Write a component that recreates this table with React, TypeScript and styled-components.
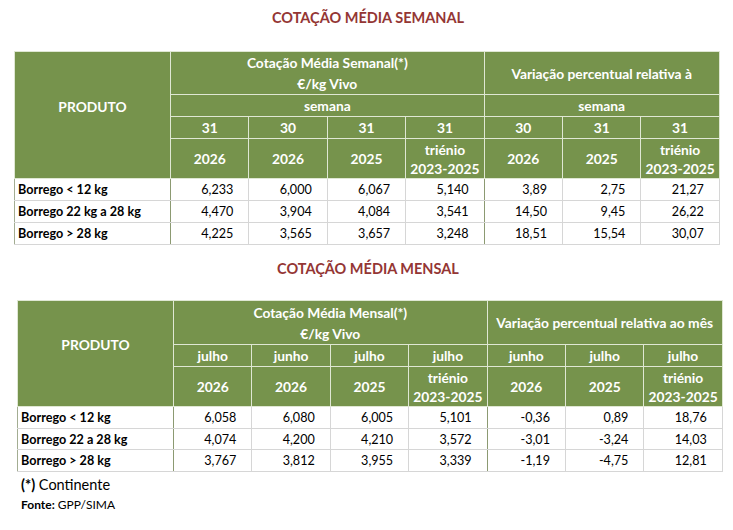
import React from "react";
import styled, { createGlobalStyle } from "styled-components";

const GlobalStyle = createGlobalStyle`
  body {
    margin: 0;
    background: #ffffff;
    font-family: Lato, "Open Sans", "Liberation Sans", sans-serif;
  }
`;

const GREEN = "#76934c";
const HEAD_LINE = "#dfe7d3";
const DARK_LINE = "#8c9a72";
const LIGHT_LINE = "#d6d6d6";

const Page = styled.div`
  width: 733px;
  height: 530px;
  display: flex;
  flex-direction: column;
  padding-top: 8px;
  box-sizing: border-box;
`;

const Title = styled.h2<{ $top: number }>`
  margin: ${(p) => p.$top}px 0 0 0;
  height: 20px;
  line-height: 20px;
  text-align: center;
  font-size: 14.5px;
  font-weight: 700;
  color: #943634;
  padding-left: 3px;
`;

const Table = styled.table<{ $left: number; $top: number }>`
  margin: ${(p) => p.$top}px 0 0 ${(p) => p.$left}px;
  width: 705px;
  border-collapse: collapse;
  table-layout: fixed;
  border: 1px solid #a3ad92;
  font-size: 12.6px;
`;

const Row = styled.tr<{ $h: number }>`
  height: ${(p) => p.$h}px;
`;

const Head = styled.th<{ $pb?: number; $lh?: number }>`
  background: ${GREEN};
  color: #ffffff;
  font-weight: 700;
  font-size: 13.8px;
  text-align: center;
  vertical-align: middle;
  border: 1px solid ${HEAD_LINE};
  padding: 0 1px ${(p) => p.$pb ?? 0}px;
  line-height: ${(p) => p.$lh ?? 19}px;
  white-space: nowrap;
`;

const NameCell = styled.td`
  font-weight: 700;
  text-align: left;
  color: #000;
  padding: 0 0 0 3px;
  border-bottom: 1px solid ${LIGHT_LINE};
  border-right: 1px solid ${DARK_LINE};
  white-space: nowrap;
`;

const ValueCell = styled.td<{ $strong?: boolean }>`
  text-align: right;
  color: #000;
  padding: 0 15px 0 0;
  border-bottom: 1px solid ${LIGHT_LINE};
  border-right: 1px solid ${(p) => (p.$strong ? DARK_LINE : LIGHT_LINE)};
`;

const Notes = styled.div`
  margin: 2px 0 0 21px;
  display: flex;
  flex-direction: column;
  color: #000;
`;

const NoteLine = styled.div<{ $size: number; $h: number }>`
  height: ${(p) => p.$h}px;
  line-height: ${(p) => p.$h}px;
  font-size: ${(p) => p.$size}px;

  b {
    font-weight: 700;
  }
`;

type DataRow = { name: string; values: string[] };

const weekly: DataRow[] = [
  { name: "Borrego < 12 kg", values: ["6,233", "6,000", "6,067", "5,140", "3,89", "2,75", "21,27"] },
  { name: "Borrego 22 kg a 28 kg", values: ["4,470", "3,904", "4,084", "3,541", "14,50", "9,45", "26,22"] },
  { name: "Borrego > 28 kg", values: ["4,225", "3,565", "3,657", "3,248", "18,51", "15,54", "30,07"] },
];

const monthly: DataRow[] = [
  { name: "Borrego < 12 kg", values: ["6,058", "6,080", "6,005", "5,101", "-0,36", "0,89", "18,76"] },
  { name: "Borrego 22 a 28 kg", values: ["4,074", "4,200", "4,210", "3,572", "-3,01", "-3,24", "14,03"] },
  { name: "Borrego > 28 kg", values: ["3,767", "3,812", "3,955", "3,339", "-1,19", "-4,75", "12,81"] },
];

const Cols = () => (
  <colgroup>
    <col style={{ width: 156 }} />
    {Array.from({ length: 7 }).map((_, i) => (
      <col key={i} style={{ width: 78.4 }} />
    ))}
  </colgroup>
);

const Triennium = () => (
  <>
    triénio
    <br />
    2023-2025
  </>
);

const YearRow = () => (
  <Row $h={40}>
    <Head>2026</Head>
    <Head>2026</Head>
    <Head>2025</Head>
    <Head>
      <Triennium />
    </Head>
    <Head>2026</Head>
    <Head>2025</Head>
    <Head>
      <Triennium />
    </Head>
  </Row>
);

const Body = ({ rows, heights }: { rows: DataRow[]; heights: number[] }) => (
  <tbody>
    {rows.map((r, i) => (
      <Row key={r.name} $h={heights[i]}>
        <NameCell>{r.name}</NameCell>
        {r.values.map((v, j) => (
          <ValueCell key={j} $strong={j === 3}>
            {v}
          </ValueCell>
        ))}
      </Row>
    ))}
  </tbody>
);

export default function App() {
  return (
    <Page>
      <GlobalStyle />
      <Title $top={0}>COTAÇÃO MÉDIA SEMANAL</Title>
      <Table $left={14} $top={23}>
        <Cols />
        <thead>
          <Row $h={43}>
            <Head rowSpan={4} $pb={17}>
              PRODUTO
            </Head>
            <Head colSpan={4} $lh={21}>
              Cotação Média Semanal(*)
              <br />
              €/kg Vivo
            </Head>
            <Head colSpan={3}>Variação percentual relativa à</Head>
          </Row>
          <Row $h={22}>
            <Head colSpan={4}>semana</Head>
            <Head colSpan={3}>semana</Head>
          </Row>
          <Row $h={22}>
            {["31", "30", "31", "31", "30", "31", "31"].map((w, i) => (
              <Head key={i}>{w}</Head>
            ))}
          </Row>
          <YearRow />
        </thead>
        <Body rows={weekly} heights={[22, 22, 22]} />
      </Table>

      <Title $top={14}>COTAÇÃO MÉDIA MENSAL</Title>
      <Table $left={17} $top={21}>
        <Cols />
        <thead>
          <Row $h={44}>
            <Head rowSpan={3} $pb={18}>
              PRODUTO
            </Head>
            <Head colSpan={4} $lh={21}>
              Cotação Média Mensal(*)
              <br />
              €/kg Vivo
            </Head>
            <Head colSpan={3}>Variação percentual relativa ao mês</Head>
          </Row>
          <Row $h={22}>
            {["julho", "junho", "julho", "julho", "junho", "julho", "julho"].map((m, i) => (
              <Head key={i}>{m}</Head>
            ))}
          </Row>
          <YearRow />
        </thead>
        <Body rows={monthly} heights={[22, 21, 22]} />
      </Table>

      <Notes>
        <NoteLine $size={14.5} $h={22}>
          <b>(*)</b> Continente
        </NoteLine>
        <NoteLine $size={12} $h={18}>
          <b>Fonte:</b> GPP/SIMA
        </NoteLine>
      </Notes>
    </Page>
  );
}
